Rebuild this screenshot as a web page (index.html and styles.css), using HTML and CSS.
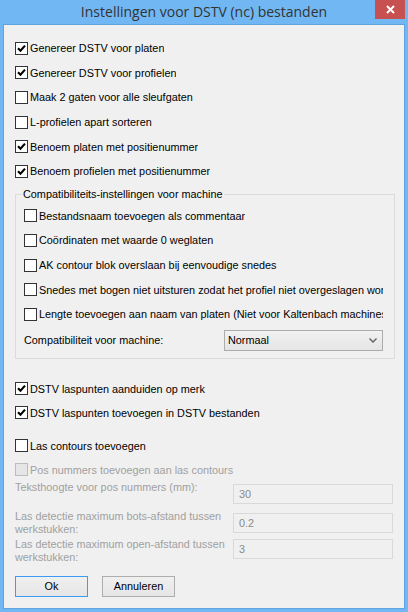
FILE: index.html
```html
<!DOCTYPE html>
<html lang="nl">
<head>
<meta charset="utf-8">
<title>Instellingen voor DSTV (nc) bestanden</title>
<link rel="stylesheet" href="styles.css">
</head>
<body>
<div class="window">
  <div class="titlebar">
    <span class="title">Instellingen voor DSTV (nc) bestanden</span>
    <span class="close"><svg width="9" height="9" viewBox="0 0 9 9"><path d="M1 1 L8 8 M8 1 L1 8" stroke="#fff" stroke-width="2" fill="none"/></svg></span>
  </div>
  <div class="client">
    <div class="checks top">
      <div class="cb"><span class="box"><svg class="tick" viewBox="0 0 11 11"><path d="M2 5.2 L4.5 7.8 L9 2.6" /></svg></span><span class="txt">Genereer DSTV voor platen</span></div>
      <div class="cb"><span class="box"><svg class="tick" viewBox="0 0 11 11"><path d="M2 5.2 L4.5 7.8 L9 2.6" /></svg></span><span class="txt">Genereer DSTV voor profielen</span></div>
      <div class="cb"><span class="box"></span><span class="txt">Maak 2 gaten voor alle sleufgaten</span></div>
      <div class="cb"><span class="box"></span><span class="txt">L-profielen apart sorteren</span></div>
      <div class="cb"><span class="box"><svg class="tick" viewBox="0 0 11 11"><path d="M2 5.2 L4.5 7.8 L9 2.6" /></svg></span><span class="txt">Benoem platen met positienummer</span></div>
      <div class="cb"><span class="box"><svg class="tick" viewBox="0 0 11 11"><path d="M2 5.2 L4.5 7.8 L9 2.6" /></svg></span><span class="txt">Benoem profielen met positienummer</span></div>
    </div>
    <fieldset class="group">
      <legend class="legend">Compatibiliteits-instellingen voor machine</legend>
      <div class="cb"><span class="box"></span><span class="txt">Bestandsnaam toevoegen als commentaar</span></div>
      <div class="cb"><span class="box"></span><span class="txt">Coördinaten met waarde 0 weglaten</span></div>
      <div class="cb"><span class="box"></span><span class="txt">AK contour blok overslaan bij eenvoudige snedes</span></div>
      <div class="cb"><span class="box"></span><span class="txt">Snedes met bogen niet uitsturen zodat het profiel niet overgeslagen wordt</span></div>
      <div class="cb"><span class="box"></span><span class="txt">Lengte toevoegen aan naam van platen (Niet voor Kaltenbach machines)</span></div>
      <div class="machine">
        <span class="mlabel">Compatibiliteit voor machine:</span>
        <div class="select"><span class="sval">Normaal</span><svg class="chev" width="8" height="5" viewBox="0 0 8 5"><path d="M0.5 0.5 L4 4 L7.5 0.5" stroke="#606060" stroke-width="1.4" fill="none"/></svg></div>
      </div>
    </fieldset>
    <div class="checks pair1">
      <div class="cb row24"><span class="box"><svg class="tick" viewBox="0 0 11 11"><path d="M2 5.2 L4.5 7.8 L9 2.6" /></svg></span><span class="txt">DSTV laspunten aanduiden op merk</span></div>
      <div class="cb row24"><span class="box"><svg class="tick" viewBox="0 0 11 11"><path d="M2 5.2 L4.5 7.8 L9 2.6" /></svg></span><span class="txt">DSTV laspunten toevoegen in DSTV bestanden</span></div>
    </div>
    <div class="checks pair2">
      <div class="cb row24"><span class="box"></span><span class="txt">Las contours toevoegen</span></div>
      <div class="cb row24 disabled"><span class="box"></span><span class="txt">Pos nummers toevoegen aan las contours</span></div>
    </div>
    <div class="fields">
      <div class="field f1">
        <span class="flabel">Teksthoogte voor pos nummers (mm):</span>
        <span class="input in1">30</span>
      </div>
      <div class="field f2">
        <span class="flabel">Las detectie maximum bots-afstand tussen<br>werkstukken:</span>
        <span class="input in2">0.2</span>
      </div>
      <div class="field f3">
        <span class="flabel">Las detectie maximum open-afstand tussen<br>werkstukken:</span>
        <span class="input in3">3</span>
      </div>
    </div>
    <div class="buttons">
      <span class="btn default">Ok</span>
      <span class="btn">Annuleren</span>
    </div>
  </div>
</div>
</body>
</html>
```

FILE: styles.css
```css
html, body {
  margin: 0;
  padding: 0;
}
body {
  width: 408px;
  height: 612px;
  overflow: hidden;
  font-family: "Liberation Sans", Arial, sans-serif;
  font-size: 10.85px;
  color: #000;
}
.window {
  box-sizing: border-box;
  width: 408px;
  height: 612px;
  background: #70b7f4;
  padding: 0 3px 3px 3px;
  display: flex;
  flex-direction: column;
  position: relative;
}
.titlebar {
  height: 24px;
  flex: none;
  display: flex;
  justify-content: center;
  align-items: center;
}
.title {
  font-family: "Open Sans", "Noto Sans", sans-serif;
  font-size: 14px;
  color: #333;
  margin-top: -1px;
}
.close {
  position: absolute;
  top: 0;
  right: 3px;
  width: 30px;
  height: 19px;
  background: #c75050;
  display: flex;
  align-items: center;
  justify-content: center;
}
.client {
  flex: 1;
  background: #f0f0f0;
  border: 1px solid #5fa4df;
  padding: 11px 0 0 11px;
  display: flex;
  flex-direction: column;
}
.checks {
  display: flex;
  flex-direction: column;
}
.cb {
  height: 24.6px;
  display: flex;
  align-items: center;
  white-space: nowrap;
  overflow: hidden;
}
.row24 {
  height: 24px;
}
.box {
  box-sizing: border-box;
  width: 13px;
  height: 13px;
  flex: none;
  border: 1px solid #333;
  background: #fff;
  display: flex;
  align-items: center;
  justify-content: center;
  margin-right: 2px;
}
.tick {
  width: 11px;
  height: 11px;
}
.tick path {
  fill: none;
  stroke: #000;
  stroke-width: 2.1;
}
.txt {
  overflow: hidden;
  text-overflow: clip;
}
.disabled .box {
  background: #e6e6e6;
  border-color: #bcbcbc;
}
.disabled .txt {
  color: #a0a0a0;
}
.group {
  margin: 4px 9px 0 0;
  padding: 3px 11px 4px 8px;
  border: 1px solid #dcdcdc;
  min-width: 0;
}
.legend {
  padding: 0 1px;
  margin-left: -2px;
  line-height: 13px;
}
.machine {
  height: 27px;
  display: flex;
  align-items: center;
}
.mlabel {
  width: 200px;
  flex: none;
}
.select {
  box-sizing: border-box;
  width: 160px;
  height: 21px;
  border: 1px solid #acacac;
  background: linear-gradient(#f2f2f2, #e5e5e5);
  display: flex;
  align-items: center;
  justify-content: space-between;
  padding: 0 5px 0 3px;
}
.pair1 {
  margin-top: 18px;
}
.pair2 {
  margin-top: 9px;
}
.fields {
  display: flex;
  flex-direction: column;
  margin-top: -1px;
  color: #a0a0a0;
}
.field {
  display: flex;
  align-items: flex-start;
}
.flabel {
  width: 218px;
  flex: none;
  line-height: 13.6px;
}
.input {
  box-sizing: border-box;
  width: 160px;
  height: 20px;
  border: 1px solid #d9d9d9;
  background: #f0f0f0;
  color: #8a8a8a;
  padding: 0 5px;
  display: flex;
  align-items: center;
}
.in1 {
  margin-top: 3px;
}
.f2 {
  margin-top: 6px;
}
.in2 {
  margin-top: 3px;
}
.f3 {
  margin-top: 1px;
}
.in3 {
  margin-top: 1px;
}
.buttons {
  display: flex;
  gap: 14px;
  margin-top: 11px;
}
.btn {
  box-sizing: border-box;
  width: 73px;
  height: 21px;
  border: 1px solid #adadad;
  background: linear-gradient(#f0f0f0, #e5e5e5);
  display: flex;
  align-items: center;
  justify-content: center;
}
.btn.default {
  border-color: #3c9cf5;
}
```
